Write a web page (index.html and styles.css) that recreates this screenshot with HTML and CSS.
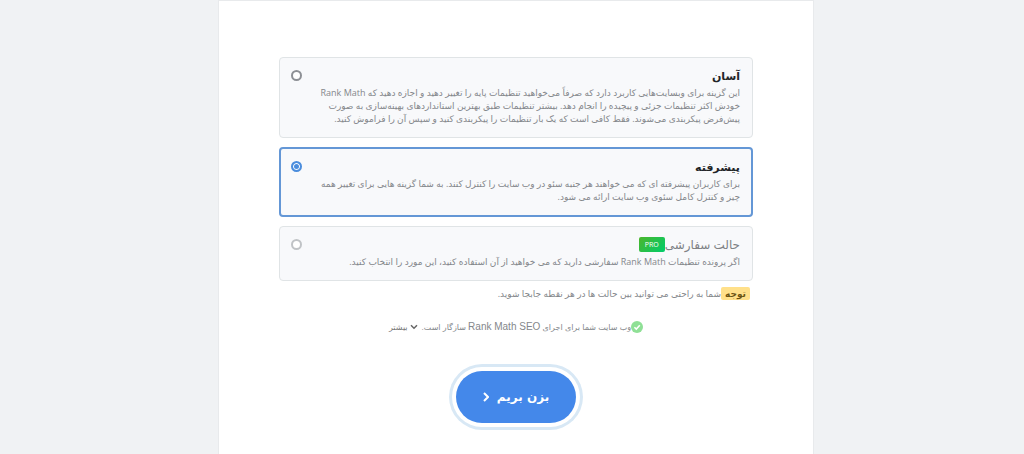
FILE: index.html
```html
<!DOCTYPE html>
<html lang="fa" dir="rtl">
<head>
    <meta charset="UTF-8">
    <meta name="viewport" content="width=device-width, initial-scale=1.0">
    <title>Rank Math SEO</title>
    <link rel="stylesheet" href="styles.css">
</head>
<body>
    <main class="wizard">
        <form class="wizard-form">
            <div class="mode">
                <div class="mode-text">
                    <label class="mode-title" for="mode-easy">آسان</label>
                    <p>این گزینه برای وبسایت‌هایی کاربرد دارد که صرفاً می‌خواهید تنظیمات پایه را تغییر دهید و اجازه دهید که Rank Math خودش اکثر تنظیمات جزئی و پیچیده را انجام دهد. بیشتر تنظیمات طبق بهترین استانداردهای بهینه‌سازی به صورت پیش‌فرض پیکربندی می‌شوند. فقط کافی است که یک بار تنظیمات را پیکربندی کنید و سپس آن را فراموش کنید.</p>
                </div>
                <input type="radio" id="mode-easy" name="mode" value="easy">
            </div>

            <div class="mode active">
                <div class="mode-text">
                    <label class="mode-title" for="mode-advanced">پیشرفته</label>
                    <p>برای کاربران پیشرفته ای که می خواهند هر جنبه سئو در وب سایت را کنترل کنند. به شما گزینه هایی برای تغییر همه چیز و کنترل کامل سئوی وب سایت ارائه می شود.</p>
                </div>
                <input type="radio" id="mode-advanced" name="mode" value="advanced" checked>
            </div>

            <div class="mode custom">
                <div class="mode-text">
                    <label class="mode-title" for="mode-custom">حالت سفارشی<span class="pro">PRO</span></label>
                    <p>اگر پرونده تنظیمات Rank Math سفارشی دارید که می خواهید از آن استفاده کنید، این مورد را انتخاب کنید.</p>
                </div>
                <input type="radio" id="mode-custom" name="mode" value="custom" disabled>
            </div>

            <p class="note"><strong>توجه</strong>شما به راحتی می توانید بین حالت ها در هر نقطه جابجا شوید.</p>

            <div class="status">
                <svg class="check" viewBox="0 0 12 12" aria-hidden="true">
                    <circle cx="6" cy="6" r="6" fill="#8fe096"/>
                    <path d="M3.4 6.2l1.9 1.9 3.5-3.9" fill="none" stroke="#fff" stroke-width="1.5"/>
                </svg>
                <span>وب سایت شما برای اجرای <span class="brand">Rank Math SEO</span> سازگار است.</span>
                <a class="more" href="#">
                    <svg viewBox="0 0 8 6" aria-hidden="true">
                        <path d="M1 1.2l3 3 3-3" fill="none" stroke="#666" stroke-width="1.5"/>
                    </svg>
                    بیشتر
                </a>
            </div>

            <button class="start" type="button">
                بزن بریم
                <svg viewBox="0 0 6 10" aria-hidden="true">
                    <path d="M1 1l4 4-4 4" fill="none" stroke="#fff" stroke-width="2"/>
                </svg>
            </button>
        </form>
    </main>
</body>
</html>
```

FILE: styles.css
```css
*{
    box-sizing: border-box;
    padding: 0;
    margin: 0;
}
body{
    padding-left: 8px;
    background-color: #f0f2f4;
    color: #84878b;
    font-family: "Open Sans", "DejaVu Sans", sans-serif;
    font-size: 9px;
    line-height: 13px;
}
.wizard{
    max-width: 596px;
    min-height: 100vh;
    margin: 0 auto;
    padding: 56px 60px 24px;
    border: 1px solid #e8eaec;
    border-bottom: 0;
    background-color: #fff;
}
.wizard-form{
    display: flex;
    flex-direction: column;
}
.mode{
    display: flex;
    justify-content: space-between;
    align-items: flex-start;
    margin-bottom: 9px;
    padding: 10px 12px 12px 11px;
    border: 1px solid #e0e4e6;
    border-radius: 4px;
    background-color: #f8f9fb;
}
.mode.active{
    padding: 10px 11px 12px 10px;
    border: 2px solid #6497d6;
}
.mode-text{
    max-width: 430px;
}
.mode-title{
    display: flex;
    align-items: center;
    height: 14px;
    margin-bottom: 4px;
    color: #222528;
    font-size: 11px;
    font-weight: bold;
}
.custom .mode-title{
    color: #7e8185;
    font-size: 12px;
    font-weight: normal;
}
.pro{
    padding: 0 6px;
    border-radius: 2px;
    background: linear-gradient(135deg, #4cb52b, #00cd6b);
    color: #fff;
    font-size: 7px;
    line-height: 15px;
}
.mode input{
    flex: none;
    width: 11px;
    height: 11px;
    margin-top: 2px;
    appearance: none;
    border: 2px solid #8d9095;
    border-radius: 50%;
    background-color: #fff;
}
.mode input:checked{
    border-color: #4b8ddd;
    background-color: #4b8ddd;
    box-shadow: inset 0 0 0 1px #fff;
}
.mode input:disabled{
    border-color: #c0c3c6;
}
.note{
    margin-top: -3px;
    padding-right: 3px;
}
.note strong{
    display: inline-block;
    padding: 0 4px;
    border-radius: 2px;
    background-color: #ffe08a;
    color: #6b5414;
}
.status{
    display: flex;
    justify-content: center;
    align-items: center;
    margin-top: 20px;
    font-family: "Liberation Sans", "DejaVu Sans", sans-serif;
    font-size: 8px;
}
.check{
    width: 12px;
    height: 12px;
}
.brand{
    font-size: 10px;
}
.more{
    display: flex;
    align-items: center;
    gap: 2px;
    margin-right: 4px;
    color: #777;
    text-decoration: none;
}
.more svg{
    width: 8px;
    height: 6px;
}
.start{
    display: flex;
    justify-content: center;
    align-items: center;
    gap: 8px;
    align-self: center;
    width: 120px;
    height: 52px;
    margin-top: 37px;
    border: 0;
    border-radius: 26px;
    background-color: #4488ea;
    box-shadow: 0 0 0 4px #fff, 0 0 0 7px #d8e8f5;
    color: #fff;
    font-family: "DejaVu Sans", sans-serif;
    font-size: 12px;
    font-weight: bold;
}
.start svg{
    width: 6px;
    height: 10px;
}
```
